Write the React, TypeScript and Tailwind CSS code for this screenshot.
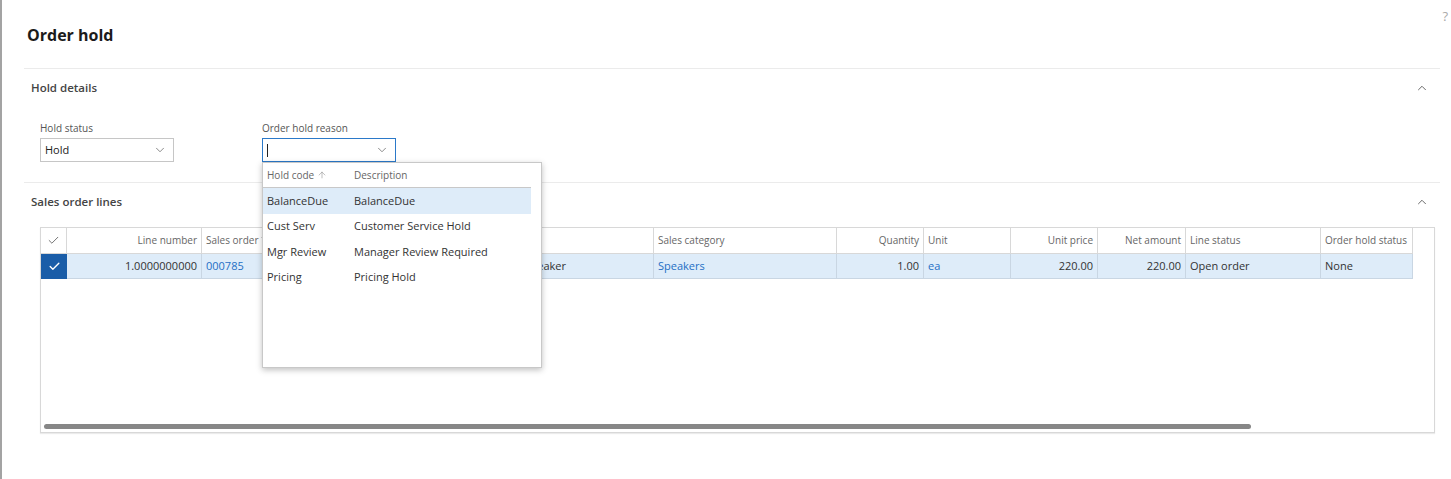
import { ChevronDown, ChevronUp, Check, ArrowUp, Filter } from 'lucide-react'

const font = { fontFamily: '"Segoe UI", "Open Sans", "Noto Sans", sans-serif' }

interface Col {
  key: string
  title: string
  width: number
  right?: boolean
  link?: boolean
  value: string
  filter?: boolean
}

const columns: Col[] = [
  { key: 'line', title: 'Line number', width: 135, right: true, value: '1.0000000000' },
  { key: 'so', title: 'Sales order', width: 119, link: true, value: '000785', filter: true },
  { key: 'item', title: 'Item number', width: 146, link: true, value: 'M0004' },
  { key: 'name', title: 'Product name', width: 187, value: 'Bluetooth Speaker' },
  { key: 'cat', title: 'Sales category', width: 183, link: true, value: 'Speakers' },
  { key: 'qty', title: 'Quantity', width: 87, right: true, value: '1.00' },
  { key: 'unit', title: 'Unit', width: 87, link: true, value: 'ea' },
  { key: 'price', title: 'Unit price', width: 87, right: true, value: '220.00' },
  { key: 'net', title: 'Net amount', width: 88, right: true, value: '220.00' },
  { key: 'status', title: 'Line status', width: 135, value: 'Open order' },
  { key: 'hold', title: 'Order hold status', width: 92, value: 'None' },
]

const holdCodes = [
  { code: 'BalanceDue', desc: 'BalanceDue' },
  { code: 'Cust Serv', desc: 'Customer Service Hold' },
  { code: 'Mgr Review', desc: 'Manager Review Required' },
  { code: 'Pricing', desc: 'Pricing Hold' },
]

function SectionHeader({ title }: { title: string }) {
  return (
    <div className="flex h-[38px] items-center justify-between pl-[7px] pr-[11px]">
      <span className="text-[11.5px] font-semibold text-[#444]">{title}</span>
      <ChevronUp size={14} strokeWidth={1.5} className="text-[#555]" />
    </div>
  )
}

export default function App() {
  return (
    <div className="flex h-[479px] w-[1451px] overflow-hidden bg-white" style={font}>
      {/* left edge strip */}
      <div className="w-[2px] shrink-0 bg-[#a3a3a3]" />

      <div className="relative flex-1">
        <span className="absolute right-[3px] top-[7px] text-[13px] text-[#aaa]">?</span>

        {/* Header */}
        <div className="h-[68px] pl-[25px] pt-[24px]">
          <h1 className="text-[16px] font-bold leading-[22px] text-[#1b1b1b]">Order hold</h1>
        </div>

        {/* Hold details */}
        <div className="ml-[22px] mr-[11px] h-[114px] border-t border-[#ebebeb]">
          <SectionHeader title="Hold details" />
          <div className="mt-[15px] flex gap-[88px] pl-[16px]">
            <div>
              <div className="text-[10px] leading-[13px] text-[#555]">Hold status</div>
              <div className="mt-[3px] flex h-[24px] w-[134px] items-center justify-between border border-[#c6c6c6] pl-[4px] pr-[6px]">
                <span className="text-[11px] text-[#222]">Hold</span>
                <ChevronDown size={14} strokeWidth={1.3} className="text-[#666]" />
              </div>
            </div>
            <div className="relative">
              <div className="text-[10px] leading-[13px] text-[#555]">Order hold reason</div>
              <div className="mt-[3px] flex h-[24px] w-[134px] items-center justify-between border border-[#2b79c9] pl-[4px] pr-[6px]">
                <span className="h-[13px] w-px bg-[#222]" />
                <ChevronDown size={14} strokeWidth={1.3} className="text-[#666]" />
              </div>

              {/* Lookup dropdown */}
              <div className="absolute left-0 top-full z-10 h-[206px] w-[280px] border border-[#c8c8c8] bg-white shadow-[0_2px_6px_rgba(0,0,0,0.25)]">
                <div className="w-[268px]">
                  <div className="flex h-[25px] items-center border-b border-[#c8c8c8] text-[10px] text-[#666]">
                    <span className="flex w-[91px] items-center gap-[3px] pl-[4px]">
                      Hold code <ArrowUp size={10} strokeWidth={1.3} className="text-[#888]" />
                    </span>
                    <span>Description</span>
                  </div>
                  {holdCodes.map((h, i) => (
                    <div
                      key={h.code}
                      className={`flex h-[25.5px] items-center text-[11px] text-[#333] ${i === 0 ? 'bg-[#deecf9]' : ''}`}
                    >
                      <span className="w-[91px] pl-[4px]">{h.code}</span>
                      <span>{h.desc}</span>
                    </div>
                  ))}
                </div>
              </div>
            </div>
          </div>
        </div>

        {/* Sales order lines */}
        <div className="ml-[22px] mr-[11px] border-t border-[#ebebeb]">
          <SectionHeader title="Sales order lines" />
          <div className="ml-[16px] mr-[5px] mt-[6px] h-[206px] border border-[#d8d8d8] shadow-[0_1px_1px_rgba(0,0,0,0.08)]">
            <div className="flex h-[178px] flex-col">
              {/* header row */}
              <div className="flex h-[26px]">
                <div className="flex w-[26px] shrink-0 items-center justify-center border-r border-b border-[#d8d8d8]">
                  <Check size={13} strokeWidth={1.5} className="text-[#555]" />
                </div>
                {columns.map((c) => (
                  <div
                    key={c.key}
                    style={{ width: c.width }}
                    className={`flex shrink-0 items-center gap-[3px] border-r border-b border-[#d8d8d8] px-[4px] text-[10px] text-[#666] ${c.right ? 'justify-end' : ''}`}
                  >
                    {c.title}
                    {c.filter && <Filter size={9} strokeWidth={1.3} className="text-[#777]" />}
                  </div>
                ))}
              </div>
              {/* data row */}
              <div className="flex h-[25px]">
                <div className="flex w-[26px] shrink-0 items-center justify-center bg-[#1a5da8]">
                  <Check size={13} strokeWidth={2.5} className="text-white" />
                </div>
                {columns.map((c) => (
                  <div
                    key={c.key}
                    style={{ width: c.width }}
                    className={`flex shrink-0 items-center border-r border-b border-[#c9d6e3] bg-[#deecf9] px-[4px] text-[11px] ${c.right ? 'justify-end' : ''} ${c.link ? 'text-[#1f6fc5]' : 'text-[#333]'}`}
                  >
                    {c.value}
                  </div>
                ))}
              </div>
            </div>
            {/* horizontal scrollbar */}
            <div className="ml-[3px] mt-[18px] h-[5px] w-[1207px] rounded-full bg-[#878787]" />
          </div>
        </div>
      </div>
    </div>
  )
}
